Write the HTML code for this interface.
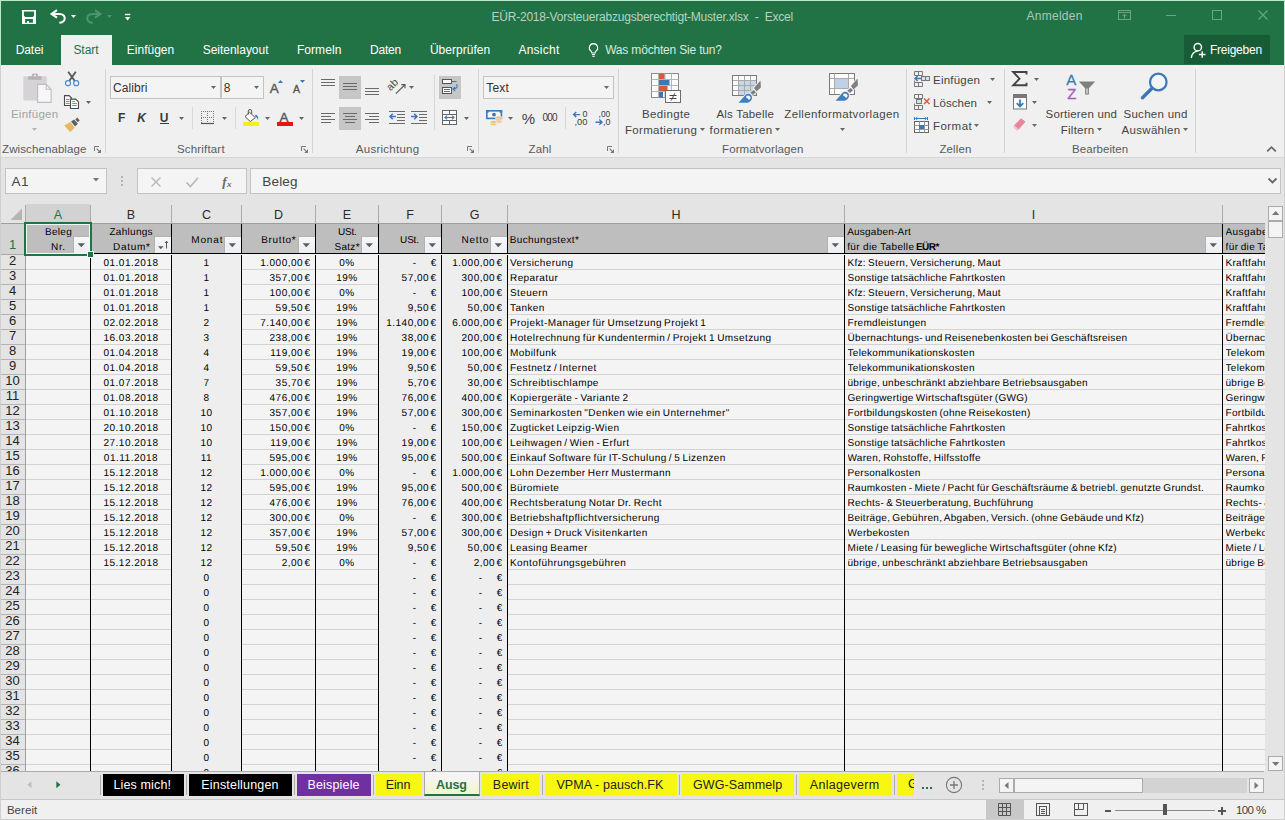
<!DOCTYPE html>
<html lang="de"><head><meta charset="utf-8"><title>EÜR-2018-Vorsteuerabzugsberechtigt-Muster.xlsx - Excel</title>
<style>
html,body{margin:0;padding:0}
body{width:1285px;height:820px;overflow:hidden;position:relative;background:#e4e4e4;font-family:'Liberation Sans',sans-serif;font-size:12px;color:#444}
div,span,svg{position:absolute;box-sizing:border-box}
.t{white-space:pre;line-height:1}
svg{overflow:visible}
.c{font-size:10px;letter-spacing:.42px;word-spacing:-1px;text-rendering:geometricPrecision;line-height:17px;height:15px;white-space:pre;color:#000;overflow:hidden}
.n{letter-spacing:.5px;word-spacing:-1.8px}
.ci{letter-spacing:.3px}
.rh{font-size:13px;line-height:15px;height:17px;width:25px;left:0;text-align:center;color:#222;overflow:hidden}
.ch{font-size:12.5px;line-height:23px;height:19px;overflow:hidden;top:204px;text-align:center;color:#2a2a2a}
.hh{text-rendering:geometricPrecision}
.fb{width:17px;height:17px;background:linear-gradient(#f6f7f9,#eceef2);border-left:1px solid #b2b2b2;border-top:1px solid #b2b2b2}
</style></head>
<body>
<div style="left:0px;top:0px;width:1285px;height:65px;background:#217346;"></div>
<svg style="left:22px;top:10px" width="14" height="14" viewBox="0 0 14 14"><path fill-rule="evenodd" fill="#fff" d="M0 0h14v14h-14zM1.9 1.4v4.2l1.2 1.3h7.8l1.2-1.3v-4.2zM3.1 9.1v3.7h1.9v-1.8h1.9v1.8h4v-3.7z"/></svg>
<svg style="left:50px;top:8px" width="18" height="16" viewBox="0 0 18 16"><path d="M7 2.2L1.6 6 7 9.7" fill="none" stroke="#fff" stroke-width="2.1" stroke-linejoin="miter"/><path d="M2.6 6H9.5C13.5 6 15.3 8.5 14.6 11.2 14 13.3 12 14.6 9.3 14.8" fill="none" stroke="#fff" stroke-width="2.1"/></svg>
<svg style="left:71px;top:15px" width="6" height="4" viewBox="0 0 6 4"><path d="M0 0H5L2.5 3Z" fill="#fff"/></svg>
<svg style="left:84px;top:8px" width="18" height="16" viewBox="0 0 18 16"><path d="M11 2.2L16.4 6 11 9.7" fill="none" stroke="#4f9470" stroke-width="2.1"/><path d="M15.4 6H8.5C4.5 6 2.7 8.5 3.4 11.2 4 13.3 6 14.6 8.7 14.8" fill="none" stroke="#4f9470" stroke-width="2.1"/></svg>
<svg style="left:107px;top:15px" width="6" height="4" viewBox="0 0 6 4"><path d="M0 0H5L2.5 3Z" fill="#4f9470"/></svg>
<svg style="left:124px;top:13px" width="8" height="8" viewBox="0 0 8 8"><rect x="0.9" y="0.8" width="5.4" height="1.4" fill="#fff"/><path d="M0.9 4h5.4l-2.7 3.4z" fill="#fff"/></svg>
<span class="t" style="left:491.48px;top:11px;font-size:12px;color:#b5d3c2;letter-spacing:-0.213px;">EÜR-2018-Vorsteuerabzugsberechtigt-Muster.xlsx  -  Excel</span>
<span class="t" style="left:1026.48px;top:10px;font-size:12px;color:#a9cab8;letter-spacing:0.270px;">Anmelden</span>
<svg style="left:1117px;top:9px" width="16" height="13" viewBox="0 0 16 13"><rect x="1.5" y="1.5" width="12" height="9" fill="none" stroke="#6aa585" stroke-width="1"/><path d="M1.5 3.5h12" stroke="#6aa585" stroke-width="1"/><path d="M7.5 9.5v-4.5M5.5 7l2-2 2 2" fill="none" stroke="#6aa585" stroke-width="1"/></svg>
<div style="left:1166px;top:15px;width:10px;height:1px;background:#6aa585;"></div>
<svg style="left:1211px;top:9px" width="12" height="12" viewBox="0 0 12 12"><rect x="1.5" y="1.5" width="9" height="9" fill="none" stroke="#6aa585" stroke-width="1"/></svg>
<svg style="left:1257px;top:9px" width="12" height="12" viewBox="0 0 12 12"><path d="M1.5 1.5l9 9M10.5 1.5l-9 9" stroke="#6aa585" stroke-width="1.1"/></svg>
<div style="left:61px;top:35px;width:51px;height:30px;background:#f0f0f0;"></div>
<span class="t" style="left:15.68px;top:44px;font-size:12px;color:#fff;letter-spacing:-0.069px;">Datei</span>
<span class="t" style="left:73.38px;top:44px;font-size:12px;color:#217346;letter-spacing:-0.026px;">Start</span>
<span class="t" style="left:126.78px;top:44px;font-size:12px;color:#fff;letter-spacing:0.009px;">Einfügen</span>
<span class="t" style="left:202.68px;top:44px;font-size:12px;color:#fff;letter-spacing:-0.019px;">Seitenlayout</span>
<span class="t" style="left:296.88px;top:44px;font-size:12px;color:#fff;letter-spacing:0.071px;">Formeln</span>
<span class="t" style="left:369.98px;top:44px;font-size:12px;color:#fff;letter-spacing:-0.198px;">Daten</span>
<span class="t" style="left:429.88px;top:44px;font-size:12px;color:#fff;letter-spacing:0.033px;">Überprüfen</span>
<span class="t" style="left:518.38px;top:44px;font-size:12px;color:#fff;letter-spacing:0.263px;">Ansicht</span>
<svg style="left:587px;top:42px" width="13" height="16" viewBox="0 0 13 16"><path d="M6.5 1.6a4.2 4.2 0 0 0-2.3 7.7c.5.5.7 1 .7 1.7h3.2c0-.7.2-1.2.7-1.7a4.2 4.2 0 0 0-2.3-7.7z" fill="none" stroke="#fff" stroke-width="1.1"/><path d="M4.9 12.6h3.2M5.3 14.3h2.4" stroke="#fff" stroke-width="1"/></svg>
<span class="t" style="left:605.18px;top:44px;font-size:12px;color:#d9eadf;letter-spacing:-0.181px;">Was möchten Sie tun?</span>
<div style="left:1184px;top:35px;width:86px;height:29px;background:#185c37;"></div>
<svg style="left:1190px;top:42px" width="17" height="17" viewBox="0 0 17 17"><circle cx="7.8" cy="5.2" r="3.7" fill="none" stroke="#fff" stroke-width="1.4"/><path d="M1.3 15.8c.6-4 2.9-6.4 6.4-6.7" fill="none" stroke="#fff" stroke-width="1.4"/><path d="M12.2 9.2v6.6M8.9 12.5h6.6" stroke="#fff" stroke-width="1.4"/></svg>
<span class="t" style="left:1209.88px;top:44px;font-size:12px;color:#fff;letter-spacing:-0.226px;">Freigeben</span>
<div style="left:0px;top:65px;width:1285px;height:92px;background:#f0f0f0;"></div>
<div style="left:0px;top:157px;width:1285px;height:1px;background:#d6d6d6;"></div>
<svg style="left:23px;top:73px" width="29" height="31" viewBox="0 0 29 31"><rect x="0.3" y="3.3" width="23.5" height="24.3" rx="1" fill="#d6d3d7"/><rect x="5" y="3.3" width="13.6" height="3.5" fill="#b6b3b7"/><path d="M8.8 3.5V2a1.6 1.6 0 0 1 1.6-1.6h3a1.6 1.6 0 0 1 1.6 1.6v1.5z" fill="#b6b3b7"/><circle cx="11.9" cy="2.5" r="1" fill="#f0f0f0"/><path d="M14.6 11.4h8.6l4.9 4.9v13.1H14.6z" fill="#f7f7f9" stroke="#bdbdbd" stroke-width="1.1"/><path d="M23.2 11.4v4.9h4.9" fill="none" stroke="#bdbdbd" stroke-width="1.1"/></svg>
<span class="t" style="left:10.91px;top:109px;font-size:11.5px;color:#a3a3a3;letter-spacing:0.268px;">Einfügen</span>
<svg style="left:32px;top:128px" width="6" height="4" viewBox="0 0 6 4"><path d="M0 0H5L2.5 3Z" fill="#b5b5b5"/></svg>
<svg style="left:64px;top:71px" width="16" height="16" viewBox="0 0 16 16"><path d="M4.2 0.8l6.6 9.2M11.8 0.8L5.2 10" stroke="#5a5a5a" stroke-width="1.9" fill="none"/><circle cx="4" cy="12.2" r="2.5" fill="#f4f6f9" stroke="#4a8ad0" stroke-width="1.2"/><circle cx="12.2" cy="12.2" r="2.5" fill="#f4f6f9" stroke="#4a8ad0" stroke-width="1.2"/></svg>
<svg style="left:63px;top:95px" width="17" height="15" viewBox="0 0 17 15"><path d="M1.5 0.6h4.6l2.4 2.4v7.5h-7z" fill="#fafafa" stroke="#4a4a4a" stroke-width="1.1"/><path d="M3 4.5h3.5M3 6.5h3.5M3 8.5h3.5" stroke="#4a8ad0" stroke-width="0.9"/><path d="M7.5 4.1h5.2l2.8 2.8v6.6h-8z" fill="#fafafa" stroke="#4a4a4a" stroke-width="1.1"/><path d="M9.2 8.5h4.6M9.2 10.5h4.6" stroke="#4a8ad0" stroke-width="0.9"/><path d="M9.2 6.5h2.6" stroke="#4a8ad0" stroke-width="0.9"/></svg>
<svg style="left:86px;top:101px" width="6" height="4" viewBox="0 0 6 4"><path d="M0 0H5L2.5 3Z" fill="#666"/></svg>
<svg style="left:63px;top:117px" width="18" height="16" viewBox="0 0 18 16"><path d="M1.2 8.4l6.1-3.4 4.4 5.4-4.4 4.9z" fill="#e8b766"/><path d="M8 4.6l3.2-2.2 3.6 4.4-2.6 2.6z" fill="#5f5f5f"/><path d="M12.3 2.2l2-1.6 2.4 3-2 1.6z" fill="#5f5f5f"/></svg>
<span class="t" style="left:2.11px;top:144px;font-size:11.5px;color:#5a5a5a;letter-spacing:0.090px;">Zwischenablage</span>
<svg style="left:94px;top:146px" width="8" height="8" viewBox="0 0 8 8"><path d="M0.5 5V0.5H5" fill="none" stroke="#777" stroke-width="1"/><path d="M2.6 2.6L6.4 6.4" stroke="#777" stroke-width="1.1"/><path d="M7 3.2V7H3.2z" fill="#777"/></svg>
<div style="left:105px;top:69px;width:1px;height:84px;background:#d4d4d4;"></div>
<div style="left:110px;top:76px;width:111px;height:23px;background:#f4f4f4;border:1px solid #c3c3c3;"></div>
<div style="left:221px;top:76px;width:43px;height:23px;background:#f4f4f4;border:1px solid #c3c3c3;"></div>
<span class="t" style="left:113.08px;top:82px;font-size:12px;color:#333;letter-spacing:0.054px;">Calibri</span>
<svg style="left:211px;top:86px" width="6" height="4" viewBox="0 0 6 4"><path d="M0 0H5L2.5 3Z" fill="#666"/></svg>
<span class="t" style="left:223.68px;top:82px;font-size:12px;color:#333;">8</span>
<svg style="left:254px;top:86px" width="6" height="4" viewBox="0 0 6 4"><path d="M0 0H5L2.5 3Z" fill="#666"/></svg>
<span class="t" style="left:269.79px;top:82px;font-size:13.5px;color:#555;-webkit-text-stroke:.35px #555;">A</span>
<svg style="left:278px;top:80px" width="6" height="4" viewBox="0 0 6 4"><path d="M0 3L2.5 0 5 3z" fill="#3b78b4"/></svg>
<span class="t" style="left:292.97px;top:84px;font-size:10.5px;color:#555;-webkit-text-stroke:.35px #555;">A</span>
<svg style="left:300px;top:80px" width="6" height="4" viewBox="0 0 6 4"><path d="M0 0h5L2.5 3z" fill="#3b78b4"/></svg>
<span class="t" style="left:117.98px;top:112px;font-size:12px;color:#3a3a3a;font-weight:bold;">F</span>
<span class="t" style="left:137.28px;top:112px;font-size:12px;color:#3a3a3a;font-weight:bold;font-style:italic;">K</span>
<span class="t" style="left:159.68px;top:112px;font-size:12px;color:#3a3a3a;font-weight:bold;">U</span>
<div style="left:160px;top:123px;width:9px;height:1px;background:#3a3a3a;"></div>
<svg style="left:179px;top:117px" width="6" height="4" viewBox="0 0 6 4"><path d="M0 0H5L2.5 3Z" fill="#666"/></svg>
<div style="left:192px;top:107px;width:1px;height:22px;background:#d8d8d8;"></div>
<svg style="left:200px;top:110px" width="15" height="15" viewBox="0 0 15 15"><path d="M1 1.5h13M1 7.5h13M1.5 1v7M7.5 1v12M13.5 1v12M1.5 8v5" stroke="#777" stroke-width="1" stroke-dasharray="1 1" fill="none"/><path d="M1 13.5h13" stroke="#555" stroke-width="1.2"/></svg>
<svg style="left:222px;top:117px" width="6" height="4" viewBox="0 0 6 4"><path d="M0 0H5L2.5 3Z" fill="#666"/></svg>
<div style="left:235px;top:107px;width:1px;height:22px;background:#d8d8d8;"></div>
<svg style="left:243px;top:109px" width="18" height="14" viewBox="0 0 18 14"><path d="M6.5 3.2l5.8 5.4-5 4-5.3-5z" fill="#fafafa" stroke="#555" stroke-width="1"/><path d="M5.3 5.5V2.2a1.7 1.7 0 0 1 3.4 0v2.6" fill="none" stroke="#555" stroke-width="1"/><path d="M12.5 5.6c2 .6 3.2 2.6 2.6 5.4-.9-2-1.8-3-3-3.4z" fill="#3b78b4"/></svg>
<div style="left:243px;top:122px;width:16px;height:4px;background:#f5ef1c;"></div>
<svg style="left:265px;top:117px" width="6" height="4" viewBox="0 0 6 4"><path d="M0 0H5L2.5 3Z" fill="#666"/></svg>
<span class="t" style="left:279.39px;top:111px;font-size:13.5px;color:#555;-webkit-text-stroke:.4px #555;">A</span>
<div style="left:277px;top:122px;width:16px;height:4px;background:#ee1111;"></div>
<svg style="left:299px;top:117px" width="6" height="4" viewBox="0 0 6 4"><path d="M0 0H5L2.5 3Z" fill="#666"/></svg>
<span class="t" style="left:176.91px;top:144px;font-size:11.5px;color:#5a5a5a;letter-spacing:0.185px;">Schriftart</span>
<svg style="left:301px;top:146px" width="8" height="8" viewBox="0 0 8 8"><path d="M0.5 5V0.5H5" fill="none" stroke="#777" stroke-width="1"/><path d="M2.6 2.6L6.4 6.4" stroke="#777" stroke-width="1.1"/><path d="M7 3.2V7H3.2z" fill="#777"/></svg>
<div style="left:312px;top:69px;width:1px;height:84px;background:#d4d4d4;"></div>
<div style="left:321px;top:79px;width:14px;height:1px;background:#6a6a6a;"></div>
<div style="left:321px;top:82px;width:14px;height:1px;background:#6a6a6a;"></div>
<div style="left:321px;top:85px;width:14px;height:1px;background:#6a6a6a;"></div>
<div style="left:339px;top:76px;width:22px;height:23px;background:#c6c6c6;"></div>
<div style="left:343px;top:83px;width:14px;height:1px;background:#6a6a6a;"></div>
<div style="left:343px;top:86px;width:14px;height:1px;background:#6a6a6a;"></div>
<div style="left:343px;top:89px;width:14px;height:1px;background:#6a6a6a;"></div>
<div style="left:365px;top:88px;width:14px;height:1px;background:#6a6a6a;"></div>
<div style="left:365px;top:91px;width:14px;height:1px;background:#6a6a6a;"></div>
<div style="left:365px;top:94px;width:14px;height:1px;background:#6a6a6a;"></div>
<svg style="left:388px;top:78px" width="18" height="17" viewBox="0 0 18 17"><path d="M7.9 15.6L16.6 7" stroke="#555" stroke-width="1.1"/><path d="M13.4 6.6h3.6v3.6" fill="none" stroke="#555" stroke-width="1.1"/><text x="0" y="0" font-size="10.5" fill="#4a4a4a" font-family="Liberation Sans" transform="translate(2.6 13.2) rotate(-45)">ab</text></svg>
<svg style="left:409px;top:86px" width="6" height="4" viewBox="0 0 6 4"><path d="M0 0H5L2.5 3Z" fill="#666"/></svg>
<div style="left:321px;top:113px;width:14px;height:1px;background:#6a6a6a;"></div>
<div style="left:321px;top:116px;width:10px;height:1px;background:#6a6a6a;"></div>
<div style="left:321px;top:119px;width:14px;height:1px;background:#6a6a6a;"></div>
<div style="left:321px;top:122px;width:10px;height:1px;background:#6a6a6a;"></div>
<div style="left:339px;top:107px;width:22px;height:23px;background:#c6c6c6;"></div>
<div style="left:343px;top:113px;width:14px;height:1px;background:#6a6a6a;"></div>
<div style="left:345px;top:116px;width:10px;height:1px;background:#6a6a6a;"></div>
<div style="left:343px;top:119px;width:14px;height:1px;background:#6a6a6a;"></div>
<div style="left:345px;top:122px;width:10px;height:1px;background:#6a6a6a;"></div>
<div style="left:365px;top:113px;width:14px;height:1px;background:#6a6a6a;"></div>
<div style="left:369px;top:116px;width:10px;height:1px;background:#6a6a6a;"></div>
<div style="left:365px;top:119px;width:14px;height:1px;background:#6a6a6a;"></div>
<div style="left:369px;top:122px;width:10px;height:1px;background:#6a6a6a;"></div>
<div style="left:389px;top:111px;width:16px;height:1px;background:#6a6a6a;"></div>
<div style="left:397px;top:114px;width:8px;height:1px;background:#6a6a6a;"></div>
<div style="left:397px;top:117px;width:8px;height:1px;background:#6a6a6a;"></div>
<div style="left:397px;top:120px;width:8px;height:1px;background:#6a6a6a;"></div>
<div style="left:389px;top:123px;width:16px;height:1px;background:#6a6a6a;"></div>
<svg style="left:389px;top:113px" width="8" height="8" viewBox="0 0 8 8"><path d="M7 3.5H1.2M3.8 0.8L1 3.5l2.8 2.7" fill="none" stroke="#3b78b4" stroke-width="1.5"/></svg>
<div style="left:411px;top:111px;width:16px;height:1px;background:#6a6a6a;"></div>
<div style="left:419px;top:114px;width:8px;height:1px;background:#6a6a6a;"></div>
<div style="left:419px;top:117px;width:8px;height:1px;background:#6a6a6a;"></div>
<div style="left:419px;top:120px;width:8px;height:1px;background:#6a6a6a;"></div>
<div style="left:411px;top:123px;width:16px;height:1px;background:#6a6a6a;"></div>
<svg style="left:411px;top:113px" width="8" height="8" viewBox="0 0 8 8"><path d="M0 3.5h5.8M3.2 0.8L6 3.5 3.2 6.2" fill="none" stroke="#3b78b4" stroke-width="1.5"/></svg>
<div style="left:434px;top:75px;width:1px;height:55px;background:#d8d8d8;"></div>
<div style="left:439px;top:76px;width:22px;height:23px;background:#c6c6c6;"></div>
<svg style="left:442px;top:79px" width="17" height="16" viewBox="0 0 17 16"><rect x="0.5" y="0.5" width="9" height="4" fill="#fafafa" stroke="#555"/><path d="M9.5 2.5h5" stroke="#3b78b4"/><rect x="0.5" y="8.5" width="9" height="6" fill="#fafafa" stroke="#555"/><path d="M2 10.5h6M2 12.5h6" stroke="#3b78b4"/><path d="M14.5 5c1.5 2 .5 5-3 5M13 8l-2 2 2 2" fill="none" stroke="#3b78b4" stroke-width="1.1"/></svg>
<svg style="left:442px;top:110px" width="16" height="16" viewBox="0 0 16 16"><rect x="0.5" y="0.5" width="14" height="14" fill="#fafafa" stroke="#666"/><path d="M0.5 4.5h14M0.5 10.5h14M7.5 0.5v4M7.5 10.5v4" stroke="#666" fill="none"/><path d="M3 7.5h9M5 5.7L3 7.5l2 1.8M10 5.7l2 1.8-2 1.8" fill="none" stroke="#3b78b4" stroke-width="1.1"/></svg>
<svg style="left:464px;top:117px" width="6" height="4" viewBox="0 0 6 4"><path d="M0 0H5L2.5 3Z" fill="#666"/></svg>
<span class="t" style="left:355.81px;top:144px;font-size:11.5px;color:#5a5a5a;letter-spacing:0.265px;">Ausrichtung</span>
<svg style="left:467px;top:146px" width="8" height="8" viewBox="0 0 8 8"><path d="M0.5 5V0.5H5" fill="none" stroke="#777" stroke-width="1"/><path d="M2.6 2.6L6.4 6.4" stroke="#777" stroke-width="1.1"/><path d="M7 3.2V7H3.2z" fill="#777"/></svg>
<div style="left:478px;top:69px;width:1px;height:84px;background:#d4d4d4;"></div>
<div style="left:483px;top:76px;width:131px;height:23px;background:#f4f4f4;border:1px solid #c3c3c3;"></div>
<span class="t" style="left:486.18px;top:82px;font-size:12px;color:#333;letter-spacing:0.241px;">Text</span>
<svg style="left:604px;top:86px" width="6" height="4" viewBox="0 0 6 4"><path d="M0 0H5L2.5 3Z" fill="#666"/></svg>
<svg style="left:486px;top:110px" width="17" height="16" viewBox="0 0 17 16"><rect x="0.8" y="0.8" width="14.6" height="7.6" fill="#f4f6f9" stroke="#3b78b4" stroke-width="1.6"/><circle cx="8" cy="4.6" r="1.9" fill="#3b78b4"/><rect x="0" y="0" width="2.6" height="2.6" fill="#3b78b4"/><rect x="13.6" y="0" width="2.6" height="2.6" fill="#3b78b4"/><g fill="#ebbf78" stroke="#f0f0f0" stroke-width="0.7"><ellipse cx="12.6" cy="11.6" rx="3.4" ry="1.5"/><ellipse cx="12.6" cy="9.6" rx="3.4" ry="1.5"/><ellipse cx="12.6" cy="7.6" rx="3.4" ry="1.5"/><ellipse cx="7.4" cy="14" rx="3.4" ry="1.5"/><ellipse cx="7.4" cy="12" rx="3.4" ry="1.5"/></g></svg>
<svg style="left:508px;top:117px" width="6" height="4" viewBox="0 0 6 4"><path d="M0 0H5L2.5 3Z" fill="#666"/></svg>
<span class="t" style="left:521.70px;top:111px;font-size:15px;color:#444;">%</span>
<span class="t" style="left:542.40px;top:113px;font-size:10px;color:#3a3a3a;letter-spacing:-0.750px;">000</span>
<div style="left:565px;top:107px;width:1px;height:22px;background:#d8d8d8;"></div>
<svg style="left:572px;top:110px" width="16" height="16" viewBox="0 0 16 16"><path d="M8.2 4.6H1.8M4.3 2L1.6 4.6l2.7 2.6" fill="none" stroke="#3b78b4" stroke-width="1.4"/><text x="10.4" y="7.3" font-size="9.5" fill="#3a3a3a" font-family="Liberation Sans" textLength="5" lengthAdjust="spacingAndGlyphs">0</text><text x="2.4" y="15.4" font-size="9.5" fill="#3a3a3a" font-family="Liberation Sans" textLength="13" lengthAdjust="spacingAndGlyphs">,00</text></svg>
<svg style="left:595px;top:110px" width="16" height="16" viewBox="0 0 16 16"><text x="3.6" y="7.3" font-size="9.5" fill="#3a3a3a" font-family="Liberation Sans" textLength="11.6" lengthAdjust="spacingAndGlyphs">,00</text><path d="M0.4 12.2H6.8M4.3 9.6L7 12.2l-2.7 2.6" fill="none" stroke="#3b78b4" stroke-width="1.4"/><text x="8" y="15.4" font-size="9.5" fill="#3a3a3a" font-family="Liberation Sans" textLength="7.4" lengthAdjust="spacingAndGlyphs">,0</text></svg>
<span class="t" style="left:528.61px;top:144px;font-size:11.5px;color:#5a5a5a;letter-spacing:0.135px;">Zahl</span>
<svg style="left:607px;top:146px" width="8" height="8" viewBox="0 0 8 8"><path d="M0.5 5V0.5H5" fill="none" stroke="#777" stroke-width="1"/><path d="M2.6 2.6L6.4 6.4" stroke="#777" stroke-width="1.1"/><path d="M7 3.2V7H3.2z" fill="#777"/></svg>
<div style="left:618px;top:69px;width:1px;height:84px;background:#d4d4d4;"></div>
<svg style="left:651px;top:73px" width="31" height="31" viewBox="0 0 31 31"><rect x="0.5" y="0.5" width="27" height="24" fill="#fbfbfb" stroke="#8a8a8a"/><path d="M7.5 0.5v24M14 0.5v24M20.5 0.5v24M0.5 6.5h27M0.5 12.5h27M0.5 18.5h27" stroke="#b5b5b5" fill="none"/><rect x="8" y="1" width="5.5" height="5" fill="#d9573b"/><rect x="8" y="7" width="10.5" height="5" fill="#3b78b4"/><rect x="8" y="13" width="8.5" height="5" fill="#d9573b"/><rect x="8" y="19" width="4" height="5.5" fill="#3b78b4"/><rect x="14.5" y="17.5" width="15" height="12" fill="#fbfbfb" stroke="#6a6a6a"/><path d="M18.5 22.5h7M18.5 25.5h7" stroke="#444" stroke-width="1" fill="none"/><path d="M23.8 20.2l-3.6 7.4" stroke="#444" stroke-width="0.9" fill="none"/></svg>
<span class="t" style="left:642.01px;top:109px;font-size:11.5px;color:#444;letter-spacing:0.368px;">Bedingte</span>
<span class="t" style="left:625.01px;top:125px;font-size:11.5px;color:#444;letter-spacing:0.317px;">Formatierung</span>
<svg style="left:700px;top:128px" width="6" height="4" viewBox="0 0 6 4"><path d="M0 0H5L2.5 3Z" fill="#666"/></svg>
<svg style="left:732px;top:75px" width="31" height="29" viewBox="0 0 31 29"><rect x="0.5" y="0.5" width="24" height="20" fill="#fbfbfb" stroke="#7a7a7a"/><rect x="6.5" y="5.5" width="18" height="15" fill="#c6d7ea"/><path d="M6.5 1v19M12.5 1v19M18.5 1v19M1 5.5h23M1 10.5h23M1 15.5h23" stroke="#a9a9a9" fill="none"/><rect x="0.5" y="0.5" width="24" height="20" fill="none" stroke="#7a7a7a"/><g transform="translate(0 0)"><path d="M28.5 5.6L28.9 12.4 24.4 16.4 22 13z" fill="#7f7f7f" stroke="#f0f0f0" stroke-width="1.8" paint-order="stroke" stroke-linejoin="round"/><path d="M21.7 15L24 17.3 20.8 19.9 18.3 17.4z" fill="#7f7f7f" stroke="#f0f0f0" stroke-width="1.8" paint-order="stroke" stroke-linejoin="round"/><path d="M6.6 27.7L13.4 20.1C16 17.4 20.6 19.4 19.9 23.5 19.4 26 17.1 27.7 14.8 27.7z" fill="#3f7fc0" stroke="#f0f0f0" stroke-width="1.8" paint-order="stroke" stroke-linejoin="round"/><path d="M14.2 21.2C15.8 19.6 18.6 20.6 18.7 23L17.2 24.9 14.3 22.3z" fill="#f3f6fa"/></g></svg>
<span class="t" style="left:716.51px;top:109px;font-size:11.5px;color:#444;letter-spacing:0.187px;">Als Tabelle</span>
<span class="t" style="left:709.61px;top:125px;font-size:11.5px;color:#444;letter-spacing:0.441px;">formatieren</span>
<svg style="left:775px;top:128px" width="6" height="4" viewBox="0 0 6 4"><path d="M0 0H5L2.5 3Z" fill="#666"/></svg>
<svg style="left:829px;top:73px" width="31" height="29" viewBox="0 0 31 29"><rect x="0.5" y="0.5" width="25" height="21" fill="#fbfbfb" stroke="#7a7a7a"/><rect x="5.5" y="5.5" width="14" height="10" fill="#bfd1e6"/><path d="M5.5 1v20M19.5 1v20M1 5.5h24M1 15.5h24" stroke="#a9a9a9" fill="none"/><rect x="0.5" y="0.5" width="25" height="21" fill="none" stroke="#7a7a7a"/><g transform="translate(0 0)"><path d="M28.5 5.6L28.9 12.4 24.4 16.4 22 13z" fill="#7f7f7f" stroke="#f0f0f0" stroke-width="1.8" paint-order="stroke" stroke-linejoin="round"/><path d="M21.7 15L24 17.3 20.8 19.9 18.3 17.4z" fill="#7f7f7f" stroke="#f0f0f0" stroke-width="1.8" paint-order="stroke" stroke-linejoin="round"/><path d="M6.6 27.7L13.4 20.1C16 17.4 20.6 19.4 19.9 23.5 19.4 26 17.1 27.7 14.8 27.7z" fill="#3f7fc0" stroke="#f0f0f0" stroke-width="1.8" paint-order="stroke" stroke-linejoin="round"/><path d="M14.2 21.2C15.8 19.6 18.6 20.6 18.7 23L17.2 24.9 14.3 22.3z" fill="#f3f6fa"/></g></svg>
<span class="t" style="left:784.31px;top:109px;font-size:11.5px;color:#444;letter-spacing:0.360px;">Zellenformatvorlagen</span>
<svg style="left:840px;top:128px" width="6" height="4" viewBox="0 0 6 4"><path d="M0 0H5L2.5 3Z" fill="#666"/></svg>
<span class="t" style="left:722.11px;top:144px;font-size:11.5px;color:#5a5a5a;letter-spacing:0.049px;">Formatvorlagen</span>
<div style="left:906px;top:69px;width:1px;height:84px;background:#d4d4d4;"></div>
<svg style="left:914px;top:71px" width="17" height="16" viewBox="0 0 17 16"><path d="M0.5 0.5h8v4h-8zM4.5 0.5v4M0.5 11.5h8v4h-8zM4.5 11.5v4M0.5 11.5v-2" fill="none" stroke="#777"/><rect x="7.5" y="5.5" width="8" height="4" fill="#d5dfea" stroke="#777"/><path d="M11.5 5.5v4" stroke="#777"/><path d="M7 7.5H1.2M3.6 5L1 7.5 3.6 10" fill="none" stroke="#3b78b4" stroke-width="1.4"/></svg>
<span class="t" style="left:933.01px;top:75px;font-size:11.5px;color:#444;letter-spacing:0.225px;">Einfügen</span>
<svg style="left:990px;top:78px" width="6" height="4" viewBox="0 0 6 4"><path d="M0 0H5L2.5 3Z" fill="#666"/></svg>
<svg style="left:914px;top:94px" width="17" height="16" viewBox="0 0 17 16"><path d="M0.5 0.5h8v4h-8zM4.5 0.5v4M0.5 11.5h8v4h-8zM4.5 11.5v4M0.5 9.5v2" fill="none" stroke="#777"/><rect x="2.5" y="5.5" width="5" height="4" fill="#d5dfea" stroke="#777"/><path d="M10 4.5l5.5 5.5M15.5 4.5L10 10" stroke="#e0583c" stroke-width="1.5"/></svg>
<span class="t" style="left:933.01px;top:98px;font-size:11.5px;color:#444;letter-spacing:0.066px;">Löschen</span>
<svg style="left:987px;top:101px" width="6" height="4" viewBox="0 0 6 4"><path d="M0 0H5L2.5 3Z" fill="#666"/></svg>
<svg style="left:914px;top:117px" width="17" height="17" viewBox="0 0 17 17"><path d="M0.5 0v3M13.5 0v3M1.5 1.5h11" stroke="#3b78b4" stroke-width="1"/><path d="M3.2 0.3L1.6 1.5l1.6 1.2M10.8 0.3l1.6 1.2-1.6 1.2" fill="none" stroke="#3b78b4"/><rect x="0.5" y="4.5" width="14" height="11" fill="#fbfbfb" stroke="#666"/><path d="M0.5 8.5h14M0.5 12.5h14M5.5 4.5v11M10.5 4.5v11" stroke="#999" fill="none"/><rect x="5" y="8" width="5" height="4" fill="#3b78b4"/></svg>
<span class="t" style="left:933.01px;top:121px;font-size:11.5px;color:#444;letter-spacing:0.452px;">Format</span>
<svg style="left:974px;top:124px" width="6" height="4" viewBox="0 0 6 4"><path d="M0 0H5L2.5 3Z" fill="#666"/></svg>
<span class="t" style="left:939.51px;top:144px;font-size:11.5px;color:#5a5a5a;letter-spacing:0.090px;">Zellen</span>
<div style="left:1004px;top:69px;width:1px;height:84px;background:#d4d4d4;"></div>
<svg style="left:1012px;top:71px" width="16" height="16" viewBox="0 0 16 16"><path d="M14.5 3.5V1H1.2l6.3 6.7-6.3 6.6h13.3v-2.5" fill="none" stroke="#444" stroke-width="1.9"/></svg>
<svg style="left:1034px;top:78px" width="6" height="4" viewBox="0 0 6 4"><path d="M0 0H5L2.5 3Z" fill="#666"/></svg>
<svg style="left:1013px;top:94px" width="15" height="16" viewBox="0 0 15 16"><rect x="0.5" y="0.5" width="13" height="14.5" fill="#fbfbfb" stroke="#777"/><rect x="0.5" y="0.5" width="13" height="3.5" fill="#777"/><path d="M7 5.5v7M3.8 9.2L7 12.4l3.2-3.2" fill="none" stroke="#3b78b4" stroke-width="1.8"/></svg>
<svg style="left:1032px;top:101px" width="6" height="4" viewBox="0 0 6 4"><path d="M0 0H5L2.5 3Z" fill="#666"/></svg>
<svg style="left:1013px;top:117px" width="14" height="14" viewBox="0 0 14 14"><path d="M1 8.5L8 1.2l4.5 3.6-6.8 7.6z" fill="#e8879a"/><path d="M1 8.5l4.6 4-1.4 1.2L0.2 10z" fill="#f4c0ca"/></svg>
<svg style="left:1032px;top:124px" width="6" height="4" viewBox="0 0 6 4"><path d="M0 0H5L2.5 3Z" fill="#666"/></svg>
<svg style="left:1066px;top:73px" width="31" height="28" viewBox="0 0 31 28"><text x="0.3" y="11.8" font-size="15" fill="#3b78b4" font-family="Liberation Sans" stroke="#3b78b4" stroke-width="0.3">A</text><text x="1.2" y="26.2" font-size="15" fill="#a25bbd" font-family="Liberation Sans" stroke="#a25bbd" stroke-width="0.3">Z</text><path d="M12.8 8.6h16.4l-6.3 6.6v6.3h-3.8v-6.3z" fill="#7f7f7f"/><path d="M20.4 15.4v5h1.2v-5" fill="#f0f0f0"/></svg>
<span class="t" style="left:1045.61px;top:109px;font-size:11.5px;color:#444;letter-spacing:0.194px;">Sortieren und</span>
<span class="t" style="left:1060.81px;top:125px;font-size:11.5px;color:#444;letter-spacing:0.238px;">Filtern</span>
<svg style="left:1097px;top:128px" width="6" height="4" viewBox="0 0 6 4"><path d="M0 0H5L2.5 3Z" fill="#666"/></svg>
<svg style="left:1140px;top:72px" width="30" height="29" viewBox="0 0 30 29"><circle cx="18.3" cy="10" r="8.3" fill="#f4f4f4" stroke="#3b78b4" stroke-width="2.2"/><path d="M12 16.3L2.5 25.8" stroke="#3b78b4" stroke-width="3.4" stroke-linecap="round"/></svg>
<span class="t" style="left:1123.51px;top:109px;font-size:11.5px;color:#444;letter-spacing:0.277px;">Suchen und</span>
<span class="t" style="left:1121.61px;top:125px;font-size:11.5px;color:#444;letter-spacing:0.289px;">Auswählen</span>
<svg style="left:1183px;top:128px" width="6" height="4" viewBox="0 0 6 4"><path d="M0 0H5L2.5 3Z" fill="#666"/></svg>
<span class="t" style="left:1072.01px;top:144px;font-size:11.5px;color:#5a5a5a;letter-spacing:0.062px;">Bearbeiten</span>
<div style="left:1195px;top:69px;width:1px;height:84px;background:#d4d4d4;"></div>
<svg style="left:1266px;top:145px" width="11" height="8" viewBox="0 0 11 8"><path d="M1.2 6.4L5.5 2.1l4.3 4.3" fill="none" stroke="#666" stroke-width="1.7"/></svg>
<div style="left:0px;top:158px;width:1285px;height:46px;background:#e4e4e4;"></div>
<div style="left:5px;top:168px;width:102px;height:26px;background:#f4f4f4;border:1px solid #c3c3c3;"></div>
<span class="t" style="left:11.39px;top:175px;font-size:13.5px;color:#444;letter-spacing:0.504px;">A1</span>
<svg style="left:93px;top:178px" width="7" height="5" viewBox="0 0 7 5"><path d="M0 0h6L3 3.5z" fill="#777"/></svg>
<div style="left:121px;top:176px;width:2px;height:2px;background:#b4b4b4;"></div>
<div style="left:121px;top:180px;width:2px;height:2px;background:#b4b4b4;"></div>
<div style="left:121px;top:184px;width:2px;height:2px;background:#b4b4b4;"></div>
<div style="left:137px;top:168px;width:110px;height:26px;background:#f4f4f4;border:1px solid #c3c3c3;"></div>
<svg style="left:150px;top:176px" width="12" height="12" viewBox="0 0 12 12"><path d="M1.5 1.5l9 9M10.5 1.5l-9 9" stroke="#b8b8b8" stroke-width="1.4"/></svg>
<svg style="left:185px;top:176px" width="15" height="12" viewBox="0 0 15 12"><path d="M1.5 6.5l4 4L13 1.8" fill="none" stroke="#b8b8b8" stroke-width="1.7"/></svg>
<span class="t" style="left:222.22px;top:175px;font-size:13px;color:#666;font-style:italic;font-family:'Liberation Serif',serif;font-weight:bold;">f</span>
<span class="t" style="left:227.06px;top:180px;font-size:9px;color:#666;font-style:italic;font-family:'Liberation Serif',serif;font-weight:bold;">x</span>
<div style="left:250px;top:168px;width:1031px;height:26px;background:#f4f4f4;border:1px solid #c3c3c3;"></div>
<span class="t" style="left:262.19px;top:175px;font-size:13.5px;color:#444;letter-spacing:0.222px;">Beleg</span>
<svg style="left:1267px;top:177px" width="11" height="8" viewBox="0 0 11 8"><path d="M1.5 1.5L5.5 5.5l4-4" fill="none" stroke="#666" stroke-width="1.8"/></svg>
<div style="left:0px;top:204px;width:1265px;height:20px;background:#e4e4e4;"></div>
<div style="left:0px;top:224px;width:26px;height:547px;background:#e4e4e4;"></div>
<div style="left:26px;top:224px;width:1239px;height:547px;background:#f4f4f4;"></div>
<div style="left:26px;top:269px;width:1239px;height:1px;background:#d3d3d3;"></div>
<div style="left:0px;top:269px;width:25px;height:1px;background:#b4b4b4;"></div>
<div style="left:26px;top:284px;width:1239px;height:1px;background:#d3d3d3;"></div>
<div style="left:0px;top:284px;width:25px;height:1px;background:#b4b4b4;"></div>
<div style="left:26px;top:299px;width:1239px;height:1px;background:#d3d3d3;"></div>
<div style="left:0px;top:299px;width:25px;height:1px;background:#b4b4b4;"></div>
<div style="left:26px;top:314px;width:1239px;height:1px;background:#d3d3d3;"></div>
<div style="left:0px;top:314px;width:25px;height:1px;background:#b4b4b4;"></div>
<div style="left:26px;top:329px;width:1239px;height:1px;background:#d3d3d3;"></div>
<div style="left:0px;top:329px;width:25px;height:1px;background:#b4b4b4;"></div>
<div style="left:26px;top:344px;width:1239px;height:1px;background:#d3d3d3;"></div>
<div style="left:0px;top:344px;width:25px;height:1px;background:#b4b4b4;"></div>
<div style="left:26px;top:359px;width:1239px;height:1px;background:#d3d3d3;"></div>
<div style="left:0px;top:359px;width:25px;height:1px;background:#b4b4b4;"></div>
<div style="left:26px;top:374px;width:1239px;height:1px;background:#d3d3d3;"></div>
<div style="left:0px;top:374px;width:25px;height:1px;background:#b4b4b4;"></div>
<div style="left:26px;top:389px;width:1239px;height:1px;background:#d3d3d3;"></div>
<div style="left:0px;top:389px;width:25px;height:1px;background:#b4b4b4;"></div>
<div style="left:26px;top:404px;width:1239px;height:1px;background:#d3d3d3;"></div>
<div style="left:0px;top:404px;width:25px;height:1px;background:#b4b4b4;"></div>
<div style="left:26px;top:419px;width:1239px;height:1px;background:#d3d3d3;"></div>
<div style="left:0px;top:419px;width:25px;height:1px;background:#b4b4b4;"></div>
<div style="left:26px;top:434px;width:1239px;height:1px;background:#d3d3d3;"></div>
<div style="left:0px;top:434px;width:25px;height:1px;background:#b4b4b4;"></div>
<div style="left:26px;top:449px;width:1239px;height:1px;background:#d3d3d3;"></div>
<div style="left:0px;top:449px;width:25px;height:1px;background:#b4b4b4;"></div>
<div style="left:26px;top:464px;width:1239px;height:1px;background:#d3d3d3;"></div>
<div style="left:0px;top:464px;width:25px;height:1px;background:#b4b4b4;"></div>
<div style="left:26px;top:479px;width:1239px;height:1px;background:#d3d3d3;"></div>
<div style="left:0px;top:479px;width:25px;height:1px;background:#b4b4b4;"></div>
<div style="left:26px;top:494px;width:1239px;height:1px;background:#d3d3d3;"></div>
<div style="left:0px;top:494px;width:25px;height:1px;background:#b4b4b4;"></div>
<div style="left:26px;top:509px;width:1239px;height:1px;background:#d3d3d3;"></div>
<div style="left:0px;top:509px;width:25px;height:1px;background:#b4b4b4;"></div>
<div style="left:26px;top:524px;width:1239px;height:1px;background:#d3d3d3;"></div>
<div style="left:0px;top:524px;width:25px;height:1px;background:#b4b4b4;"></div>
<div style="left:26px;top:539px;width:1239px;height:1px;background:#d3d3d3;"></div>
<div style="left:0px;top:539px;width:25px;height:1px;background:#b4b4b4;"></div>
<div style="left:26px;top:554px;width:1239px;height:1px;background:#d3d3d3;"></div>
<div style="left:0px;top:554px;width:25px;height:1px;background:#b4b4b4;"></div>
<div style="left:26px;top:569px;width:1239px;height:1px;background:#d3d3d3;"></div>
<div style="left:0px;top:569px;width:25px;height:1px;background:#b4b4b4;"></div>
<div style="left:26px;top:584px;width:1239px;height:1px;background:#d3d3d3;"></div>
<div style="left:0px;top:584px;width:25px;height:1px;background:#b4b4b4;"></div>
<div style="left:26px;top:599px;width:1239px;height:1px;background:#d3d3d3;"></div>
<div style="left:0px;top:599px;width:25px;height:1px;background:#b4b4b4;"></div>
<div style="left:26px;top:614px;width:1239px;height:1px;background:#d3d3d3;"></div>
<div style="left:0px;top:614px;width:25px;height:1px;background:#b4b4b4;"></div>
<div style="left:26px;top:629px;width:1239px;height:1px;background:#d3d3d3;"></div>
<div style="left:0px;top:629px;width:25px;height:1px;background:#b4b4b4;"></div>
<div style="left:26px;top:644px;width:1239px;height:1px;background:#d3d3d3;"></div>
<div style="left:0px;top:644px;width:25px;height:1px;background:#b4b4b4;"></div>
<div style="left:26px;top:659px;width:1239px;height:1px;background:#d3d3d3;"></div>
<div style="left:0px;top:659px;width:25px;height:1px;background:#b4b4b4;"></div>
<div style="left:26px;top:674px;width:1239px;height:1px;background:#d3d3d3;"></div>
<div style="left:0px;top:674px;width:25px;height:1px;background:#b4b4b4;"></div>
<div style="left:26px;top:689px;width:1239px;height:1px;background:#d3d3d3;"></div>
<div style="left:0px;top:689px;width:25px;height:1px;background:#b4b4b4;"></div>
<div style="left:26px;top:704px;width:1239px;height:1px;background:#d3d3d3;"></div>
<div style="left:0px;top:704px;width:25px;height:1px;background:#b4b4b4;"></div>
<div style="left:26px;top:719px;width:1239px;height:1px;background:#d3d3d3;"></div>
<div style="left:0px;top:719px;width:25px;height:1px;background:#b4b4b4;"></div>
<div style="left:26px;top:734px;width:1239px;height:1px;background:#d3d3d3;"></div>
<div style="left:0px;top:734px;width:25px;height:1px;background:#b4b4b4;"></div>
<div style="left:26px;top:749px;width:1239px;height:1px;background:#d3d3d3;"></div>
<div style="left:0px;top:749px;width:25px;height:1px;background:#b4b4b4;"></div>
<div style="left:26px;top:764px;width:1239px;height:1px;background:#d3d3d3;"></div>
<div style="left:0px;top:764px;width:25px;height:1px;background:#b4b4b4;"></div>
<div style="left:172px;top:254px;width:69px;height:517px;background:#eeeeee;"></div>
<div style="left:379px;top:254px;width:62px;height:517px;background:#eeeeee;"></div>
<div style="left:442px;top:254px;width:65px;height:517px;background:#eeeeee;"></div>
<div style="left:26px;top:224px;width:1239px;height:29px;background:#bebebe;"></div>
<div style="left:0px;top:223px;width:1265px;height:1px;background:#9e9e9e;"></div>
<div style="left:0px;top:224px;width:25px;height:30px;background:#d4d4d4;"></div>
<div style="left:0px;top:254px;width:25px;height:1px;background:#a8a8a8;"></div>
<div style="left:26px;top:204px;width:64px;height:19px;background:#d2d2d2;"></div>
<div class="ch" style="left:26px;width:64px;color:#217346">A</div>
<div style="left:90px;top:205px;width:1px;height:18px;background:#ababab;"></div>
<div class="ch" style="left:91px;width:80px;color:#2a2a2a">B</div>
<div style="left:171px;top:205px;width:1px;height:18px;background:#ababab;"></div>
<div class="ch" style="left:172px;width:69px;color:#2a2a2a">C</div>
<div style="left:241px;top:205px;width:1px;height:18px;background:#ababab;"></div>
<div class="ch" style="left:242px;width:73px;color:#2a2a2a">D</div>
<div style="left:315px;top:205px;width:1px;height:18px;background:#ababab;"></div>
<div class="ch" style="left:316px;width:62px;color:#2a2a2a">E</div>
<div style="left:378px;top:205px;width:1px;height:18px;background:#ababab;"></div>
<div class="ch" style="left:379px;width:62px;color:#2a2a2a">F</div>
<div style="left:441px;top:205px;width:1px;height:18px;background:#ababab;"></div>
<div class="ch" style="left:442px;width:65px;color:#2a2a2a">G</div>
<div style="left:507px;top:205px;width:1px;height:18px;background:#ababab;"></div>
<div class="ch" style="left:508px;width:336px;color:#2a2a2a">H</div>
<div style="left:844px;top:205px;width:1px;height:18px;background:#ababab;"></div>
<div class="ch" style="left:845px;width:377px;color:#2a2a2a">I</div>
<div style="left:1222px;top:205px;width:1px;height:18px;background:#ababab;"></div>
<div style="left:25px;top:205px;width:1px;height:18px;background:#ababab;"></div>
<svg style="left:10px;top:208px" width="13" height="13" viewBox="0 0 13 13"><path d="M12 0.5v11.5H0.5z" fill="#b5b5b5"/></svg>
<div style="left:25px;top:224px;width:1px;height:547px;background:#a0a0a0;"></div>
<div style="left:90px;top:224px;width:1px;height:29px;background:#000;"></div>
<div style="left:90px;top:255px;width:1px;height:516px;background:#000;"></div>
<div style="left:171px;top:224px;width:1px;height:29px;background:#000;"></div>
<div style="left:171px;top:255px;width:1px;height:516px;background:#000;"></div>
<div style="left:241px;top:224px;width:1px;height:29px;background:#000;"></div>
<div style="left:241px;top:255px;width:1px;height:516px;background:#000;"></div>
<div style="left:315px;top:224px;width:1px;height:29px;background:#000;"></div>
<div style="left:315px;top:255px;width:1px;height:516px;background:#000;"></div>
<div style="left:378px;top:224px;width:1px;height:29px;background:#000;"></div>
<div style="left:378px;top:255px;width:1px;height:516px;background:#000;"></div>
<div style="left:441px;top:224px;width:1px;height:29px;background:#000;"></div>
<div style="left:441px;top:255px;width:1px;height:516px;background:#000;"></div>
<div style="left:507px;top:224px;width:1px;height:29px;background:#000;"></div>
<div style="left:507px;top:255px;width:1px;height:516px;background:#000;"></div>
<div style="left:844px;top:224px;width:1px;height:29px;background:#000;"></div>
<div style="left:844px;top:255px;width:1px;height:516px;background:#000;"></div>
<div style="left:1222px;top:224px;width:1px;height:29px;background:#000;"></div>
<div style="left:1222px;top:255px;width:1px;height:516px;background:#000;"></div>
<div style="left:26px;top:253px;width:1239px;height:1px;background:#000;"></div>
<div class="rh" style="top:237px;color:#217346">1</div>
<div class="rh" style="top:253px;height:17px">2</div>
<div class="rh" style="top:268px;height:17px">3</div>
<div class="rh" style="top:283px;height:17px">4</div>
<div class="rh" style="top:298px;height:17px">5</div>
<div class="rh" style="top:313px;height:17px">6</div>
<div class="rh" style="top:328px;height:17px">7</div>
<div class="rh" style="top:343px;height:17px">8</div>
<div class="rh" style="top:358px;height:17px">9</div>
<div class="rh" style="top:373px;height:17px">10</div>
<div class="rh" style="top:388px;height:17px">11</div>
<div class="rh" style="top:403px;height:17px">12</div>
<div class="rh" style="top:418px;height:17px">13</div>
<div class="rh" style="top:433px;height:17px">14</div>
<div class="rh" style="top:448px;height:17px">15</div>
<div class="rh" style="top:463px;height:17px">16</div>
<div class="rh" style="top:478px;height:17px">17</div>
<div class="rh" style="top:493px;height:17px">18</div>
<div class="rh" style="top:508px;height:17px">19</div>
<div class="rh" style="top:523px;height:17px">20</div>
<div class="rh" style="top:538px;height:17px">21</div>
<div class="rh" style="top:553px;height:17px">22</div>
<div class="rh" style="top:568px;height:17px">23</div>
<div class="rh" style="top:583px;height:17px">24</div>
<div class="rh" style="top:598px;height:17px">25</div>
<div class="rh" style="top:613px;height:17px">26</div>
<div class="rh" style="top:628px;height:17px">27</div>
<div class="rh" style="top:643px;height:17px">28</div>
<div class="rh" style="top:658px;height:17px">29</div>
<div class="rh" style="top:673px;height:17px">30</div>
<div class="rh" style="top:688px;height:17px">31</div>
<div class="rh" style="top:703px;height:17px">32</div>
<div class="rh" style="top:718px;height:17px">33</div>
<div class="rh" style="top:733px;height:17px">34</div>
<div class="rh" style="top:748px;height:17px">35</div>
<div class="rh" style="top:763px;height:8px">36</div>
<span class="t" style="left:44.90px;top:228px;font-size:10px;color:#000;letter-spacing:0.330px;text-rendering:geometricPrecision;">Beleg</span>
<span class="t" style="left:51.10px;top:243px;font-size:10px;color:#000;letter-spacing:0.609px;text-rendering:geometricPrecision;">Nr.</span>
<div class="fb" style="left:73px;top:236px"><svg style="left:3px;top:6px" width="9" height="5" viewBox="0 0 9 5"><path d="M0.6 0.3h7.4L4.3 4.3z" fill="#5e5e5e"/></svg></div>
<span class="t" style="left:109.40px;top:228px;font-size:10px;color:#000;letter-spacing:0.294px;text-rendering:geometricPrecision;">Zahlungs</span>
<span class="t" style="left:113.00px;top:243px;font-size:10px;color:#000;letter-spacing:0.728px;text-rendering:geometricPrecision;">Datum*</span>
<div class="fb" style="left:154px;top:236px"><svg style="left:2px;top:3px" width="13" height="11" viewBox="0 0 13 11"><path d="M1 6.3h5.6L3.8 9.3z" fill="#5e5e5e"/><path d="M9.5 8.5V1.2M8 3L9.5 1.2 11 3" fill="none" stroke="#555" stroke-width="1"/></svg></div>
<span class="t" style="left:191.20px;top:236px;font-size:10px;color:#000;letter-spacing:0.876px;text-rendering:geometricPrecision;">Monat</span>
<div class="fb" style="left:224px;top:236px"><svg style="left:3px;top:6px" width="9" height="5" viewBox="0 0 9 5"><path d="M0.6 0.3h7.4L4.3 4.3z" fill="#5e5e5e"/></svg></div>
<span class="t" style="left:261.30px;top:236px;font-size:10px;color:#000;letter-spacing:0.637px;text-rendering:geometricPrecision;">Brutto*</span>
<div class="fb" style="left:298px;top:236px"><svg style="left:3px;top:6px" width="9" height="5" viewBox="0 0 9 5"><path d="M0.6 0.3h7.4L4.3 4.3z" fill="#5e5e5e"/></svg></div>
<span class="t" style="left:338.00px;top:228px;font-size:10px;color:#000;letter-spacing:-0.218px;text-rendering:geometricPrecision;">USt.</span>
<span class="t" style="left:334.40px;top:243px;font-size:10px;color:#000;letter-spacing:0.323px;text-rendering:geometricPrecision;">Satz*</span>
<div class="fb" style="left:361px;top:236px"><svg style="left:3px;top:6px" width="9" height="5" viewBox="0 0 9 5"><path d="M0.6 0.3h7.4L4.3 4.3z" fill="#5e5e5e"/></svg></div>
<span class="t" style="left:400.10px;top:236px;font-size:10px;color:#000;letter-spacing:-0.184px;text-rendering:geometricPrecision;">USt.</span>
<div class="fb" style="left:424px;top:236px"><svg style="left:3px;top:6px" width="9" height="5" viewBox="0 0 9 5"><path d="M0.6 0.3h7.4L4.3 4.3z" fill="#5e5e5e"/></svg></div>
<span class="t" style="left:461.40px;top:236px;font-size:10px;color:#000;letter-spacing:0.773px;text-rendering:geometricPrecision;">Netto</span>
<div class="fb" style="left:490px;top:236px"><svg style="left:3px;top:6px" width="9" height="5" viewBox="0 0 9 5"><path d="M0.6 0.3h7.4L4.3 4.3z" fill="#5e5e5e"/></svg></div>
<span class="t" style="left:509.70px;top:236px;font-size:10px;color:#000;letter-spacing:0.392px;text-rendering:geometricPrecision;">Buchungstext*</span>
<div class="fb" style="left:827px;top:236px"><svg style="left:3px;top:6px" width="9" height="5" viewBox="0 0 9 5"><path d="M0.6 0.3h7.4L4.3 4.3z" fill="#5e5e5e"/></svg></div>
<span class="t" style="left:847.20px;top:228px;font-size:10px;color:#000;letter-spacing:0.222px;text-rendering:geometricPrecision;">Ausgaben-Art</span>
<span class="t" style="left:847.20px;top:243px;font-size:10px;color:#000;letter-spacing:0.336px;text-rendering:geometricPrecision;">für die Tabelle </span>
<span class="t" style="left:915.90px;top:243px;font-size:10px;color:#000;letter-spacing:-0.539px;font-weight:bold;text-rendering:geometricPrecision;">EÜR*</span>
<div class="fb" style="left:1205px;top:236px"><svg style="left:3px;top:6px" width="9" height="5" viewBox="0 0 9 5"><path d="M0.6 0.3h7.4L4.3 4.3z" fill="#5e5e5e"/></svg></div>
<div class="c hh" style="left:1225.5px;top:224px;width:39.5px;height:29px;line-height:15px;overflow:hidden;padding-top:1px">Ausgaben-Art<br>für die Tabelle</div>
<div class="c n" style="left:91px;top:255px;width:80px;text-align:center;">01.01.2018</div>
<div class="c n" style="left:172px;top:255px;width:69px;text-align:center;">1</div>
<div class="c n" style="left:242px;top:255px;width:68.7px;text-align:right;">1.000,00 €</div>
<div class="c n" style="left:316px;top:255px;width:62px;text-align:center;">0%</div>
<div class="c n" style="left:379px;top:255px;width:37.7px;text-align:right;">-</div>
<div class="c n" style="left:379px;top:255px;width:57.7px;text-align:right;">€</div>
<div class="c n" style="left:442px;top:255px;width:60.7px;text-align:right;">1.000,00 €</div>
<div class="c" style="left:510px;top:255px;width:334px;text-align:left;">Versicherung</div>
<div class="c ci" style="left:847.5px;top:255px;width:374.5px;text-align:left;">Kfz: Steuern, Versicherung, Maut</div>
<div class="c ci" style="left:1225.5px;top:255px;width:39.5px;text-align:left;">Kraftfahrzeugkosten</div>
<div class="c n" style="left:91px;top:270px;width:80px;text-align:center;">01.01.2018</div>
<div class="c n" style="left:172px;top:270px;width:69px;text-align:center;">1</div>
<div class="c n" style="left:242px;top:270px;width:68.7px;text-align:right;">357,00 €</div>
<div class="c n" style="left:316px;top:270px;width:62px;text-align:center;">19%</div>
<div class="c n" style="left:379px;top:270px;width:57.7px;text-align:right;">57,00 €</div>
<div class="c n" style="left:442px;top:270px;width:60.7px;text-align:right;">300,00 €</div>
<div class="c" style="left:510px;top:270px;width:334px;text-align:left;">Reparatur</div>
<div class="c ci" style="left:847.5px;top:270px;width:374.5px;text-align:left;">Sonstige tatsächliche Fahrtkosten</div>
<div class="c ci" style="left:1225.5px;top:270px;width:39.5px;text-align:left;">Kraftfahrzeugkosten</div>
<div class="c n" style="left:91px;top:285px;width:80px;text-align:center;">01.01.2018</div>
<div class="c n" style="left:172px;top:285px;width:69px;text-align:center;">1</div>
<div class="c n" style="left:242px;top:285px;width:68.7px;text-align:right;">100,00 €</div>
<div class="c n" style="left:316px;top:285px;width:62px;text-align:center;">0%</div>
<div class="c n" style="left:379px;top:285px;width:37.7px;text-align:right;">-</div>
<div class="c n" style="left:379px;top:285px;width:57.7px;text-align:right;">€</div>
<div class="c n" style="left:442px;top:285px;width:60.7px;text-align:right;">100,00 €</div>
<div class="c" style="left:510px;top:285px;width:334px;text-align:left;">Steuern</div>
<div class="c ci" style="left:847.5px;top:285px;width:374.5px;text-align:left;">Kfz: Steuern, Versicherung, Maut</div>
<div class="c ci" style="left:1225.5px;top:285px;width:39.5px;text-align:left;">Kraftfahrzeugkosten</div>
<div class="c n" style="left:91px;top:300px;width:80px;text-align:center;">01.01.2018</div>
<div class="c n" style="left:172px;top:300px;width:69px;text-align:center;">1</div>
<div class="c n" style="left:242px;top:300px;width:68.7px;text-align:right;">59,50 €</div>
<div class="c n" style="left:316px;top:300px;width:62px;text-align:center;">19%</div>
<div class="c n" style="left:379px;top:300px;width:57.7px;text-align:right;">9,50 €</div>
<div class="c n" style="left:442px;top:300px;width:60.7px;text-align:right;">50,00 €</div>
<div class="c" style="left:510px;top:300px;width:334px;text-align:left;">Tanken</div>
<div class="c ci" style="left:847.5px;top:300px;width:374.5px;text-align:left;">Sonstige tatsächliche Fahrtkosten</div>
<div class="c ci" style="left:1225.5px;top:300px;width:39.5px;text-align:left;">Kraftfahrzeugkosten</div>
<div class="c n" style="left:91px;top:315px;width:80px;text-align:center;">02.02.2018</div>
<div class="c n" style="left:172px;top:315px;width:69px;text-align:center;">2</div>
<div class="c n" style="left:242px;top:315px;width:68.7px;text-align:right;">7.140,00 €</div>
<div class="c n" style="left:316px;top:315px;width:62px;text-align:center;">19%</div>
<div class="c n" style="left:379px;top:315px;width:57.7px;text-align:right;">1.140,00 €</div>
<div class="c n" style="left:442px;top:315px;width:60.7px;text-align:right;">6.000,00 €</div>
<div class="c" style="left:510px;top:315px;width:334px;text-align:left;">Projekt-Manager für Umsetzung Projekt 1</div>
<div class="c ci" style="left:847.5px;top:315px;width:374.5px;text-align:left;">Fremdleistungen</div>
<div class="c ci" style="left:1225.5px;top:315px;width:39.5px;text-align:left;">Fremdleistungen</div>
<div class="c n" style="left:91px;top:330px;width:80px;text-align:center;">16.03.2018</div>
<div class="c n" style="left:172px;top:330px;width:69px;text-align:center;">3</div>
<div class="c n" style="left:242px;top:330px;width:68.7px;text-align:right;">238,00 €</div>
<div class="c n" style="left:316px;top:330px;width:62px;text-align:center;">19%</div>
<div class="c n" style="left:379px;top:330px;width:57.7px;text-align:right;">38,00 €</div>
<div class="c n" style="left:442px;top:330px;width:60.7px;text-align:right;">200,00 €</div>
<div class="c" style="left:510px;top:330px;width:334px;text-align:left;">Hotelrechnung für Kundentermin / Projekt 1 Umsetzung</div>
<div class="c ci" style="left:847.5px;top:330px;width:374.5px;text-align:left;">Übernachtungs- und Reisenebenkosten bei Geschäftsreisen</div>
<div class="c ci" style="left:1225.5px;top:330px;width:39.5px;text-align:left;">Übernachtungskosten</div>
<div class="c n" style="left:91px;top:345px;width:80px;text-align:center;">01.04.2018</div>
<div class="c n" style="left:172px;top:345px;width:69px;text-align:center;">4</div>
<div class="c n" style="left:242px;top:345px;width:68.7px;text-align:right;">119,00 €</div>
<div class="c n" style="left:316px;top:345px;width:62px;text-align:center;">19%</div>
<div class="c n" style="left:379px;top:345px;width:57.7px;text-align:right;">19,00 €</div>
<div class="c n" style="left:442px;top:345px;width:60.7px;text-align:right;">100,00 €</div>
<div class="c" style="left:510px;top:345px;width:334px;text-align:left;">Mobilfunk</div>
<div class="c ci" style="left:847.5px;top:345px;width:374.5px;text-align:left;">Telekommunikationskosten</div>
<div class="c ci" style="left:1225.5px;top:345px;width:39.5px;text-align:left;">Telekommunikation</div>
<div class="c n" style="left:91px;top:360px;width:80px;text-align:center;">01.04.2018</div>
<div class="c n" style="left:172px;top:360px;width:69px;text-align:center;">4</div>
<div class="c n" style="left:242px;top:360px;width:68.7px;text-align:right;">59,50 €</div>
<div class="c n" style="left:316px;top:360px;width:62px;text-align:center;">19%</div>
<div class="c n" style="left:379px;top:360px;width:57.7px;text-align:right;">9,50 €</div>
<div class="c n" style="left:442px;top:360px;width:60.7px;text-align:right;">50,00 €</div>
<div class="c" style="left:510px;top:360px;width:334px;text-align:left;">Festnetz / Internet</div>
<div class="c ci" style="left:847.5px;top:360px;width:374.5px;text-align:left;">Telekommunikationskosten</div>
<div class="c ci" style="left:1225.5px;top:360px;width:39.5px;text-align:left;">Telekommunikation</div>
<div class="c n" style="left:91px;top:375px;width:80px;text-align:center;">01.07.2018</div>
<div class="c n" style="left:172px;top:375px;width:69px;text-align:center;">7</div>
<div class="c n" style="left:242px;top:375px;width:68.7px;text-align:right;">35,70 €</div>
<div class="c n" style="left:316px;top:375px;width:62px;text-align:center;">19%</div>
<div class="c n" style="left:379px;top:375px;width:57.7px;text-align:right;">5,70 €</div>
<div class="c n" style="left:442px;top:375px;width:60.7px;text-align:right;">30,00 €</div>
<div class="c" style="left:510px;top:375px;width:334px;text-align:left;">Schreibtischlampe</div>
<div class="c ci" style="left:847.5px;top:375px;width:374.5px;text-align:left;">übrige, unbeschränkt abziehbare Betriebsausgaben</div>
<div class="c ci" style="left:1225.5px;top:375px;width:39.5px;text-align:left;">übrige Betriebsausgaben</div>
<div class="c n" style="left:91px;top:390px;width:80px;text-align:center;">01.08.2018</div>
<div class="c n" style="left:172px;top:390px;width:69px;text-align:center;">8</div>
<div class="c n" style="left:242px;top:390px;width:68.7px;text-align:right;">476,00 €</div>
<div class="c n" style="left:316px;top:390px;width:62px;text-align:center;">19%</div>
<div class="c n" style="left:379px;top:390px;width:57.7px;text-align:right;">76,00 €</div>
<div class="c n" style="left:442px;top:390px;width:60.7px;text-align:right;">400,00 €</div>
<div class="c" style="left:510px;top:390px;width:334px;text-align:left;">Kopiergeräte - Variante 2</div>
<div class="c ci" style="left:847.5px;top:390px;width:374.5px;text-align:left;">Geringwertige Wirtschaftsgüter (GWG)</div>
<div class="c ci" style="left:1225.5px;top:390px;width:39.5px;text-align:left;">Geringwertige Güter</div>
<div class="c n" style="left:91px;top:405px;width:80px;text-align:center;">01.10.2018</div>
<div class="c n" style="left:172px;top:405px;width:69px;text-align:center;">10</div>
<div class="c n" style="left:242px;top:405px;width:68.7px;text-align:right;">357,00 €</div>
<div class="c n" style="left:316px;top:405px;width:62px;text-align:center;">19%</div>
<div class="c n" style="left:379px;top:405px;width:57.7px;text-align:right;">57,00 €</div>
<div class="c n" style="left:442px;top:405px;width:60.7px;text-align:right;">300,00 €</div>
<div class="c" style="left:510px;top:405px;width:334px;text-align:left;">Seminarkosten "Denken wie ein Unternehmer"</div>
<div class="c ci" style="left:847.5px;top:405px;width:374.5px;text-align:left;">Fortbildungskosten (ohne Reisekosten)</div>
<div class="c ci" style="left:1225.5px;top:405px;width:39.5px;text-align:left;">Fortbildungskosten</div>
<div class="c n" style="left:91px;top:420px;width:80px;text-align:center;">20.10.2018</div>
<div class="c n" style="left:172px;top:420px;width:69px;text-align:center;">10</div>
<div class="c n" style="left:242px;top:420px;width:68.7px;text-align:right;">150,00 €</div>
<div class="c n" style="left:316px;top:420px;width:62px;text-align:center;">0%</div>
<div class="c n" style="left:379px;top:420px;width:37.7px;text-align:right;">-</div>
<div class="c n" style="left:379px;top:420px;width:57.7px;text-align:right;">€</div>
<div class="c n" style="left:442px;top:420px;width:60.7px;text-align:right;">150,00 €</div>
<div class="c" style="left:510px;top:420px;width:334px;text-align:left;">Zugticket Leipzig-Wien</div>
<div class="c ci" style="left:847.5px;top:420px;width:374.5px;text-align:left;">Sonstige tatsächliche Fahrtkosten</div>
<div class="c ci" style="left:1225.5px;top:420px;width:39.5px;text-align:left;">Fahrtkosten</div>
<div class="c n" style="left:91px;top:435px;width:80px;text-align:center;">27.10.2018</div>
<div class="c n" style="left:172px;top:435px;width:69px;text-align:center;">10</div>
<div class="c n" style="left:242px;top:435px;width:68.7px;text-align:right;">119,00 €</div>
<div class="c n" style="left:316px;top:435px;width:62px;text-align:center;">19%</div>
<div class="c n" style="left:379px;top:435px;width:57.7px;text-align:right;">19,00 €</div>
<div class="c n" style="left:442px;top:435px;width:60.7px;text-align:right;">100,00 €</div>
<div class="c" style="left:510px;top:435px;width:334px;text-align:left;">Leihwagen / Wien - Erfurt</div>
<div class="c ci" style="left:847.5px;top:435px;width:374.5px;text-align:left;">Sonstige tatsächliche Fahrtkosten</div>
<div class="c ci" style="left:1225.5px;top:435px;width:39.5px;text-align:left;">Fahrtkosten</div>
<div class="c n" style="left:91px;top:450px;width:80px;text-align:center;">01.11.2018</div>
<div class="c n" style="left:172px;top:450px;width:69px;text-align:center;">11</div>
<div class="c n" style="left:242px;top:450px;width:68.7px;text-align:right;">595,00 €</div>
<div class="c n" style="left:316px;top:450px;width:62px;text-align:center;">19%</div>
<div class="c n" style="left:379px;top:450px;width:57.7px;text-align:right;">95,00 €</div>
<div class="c n" style="left:442px;top:450px;width:60.7px;text-align:right;">500,00 €</div>
<div class="c" style="left:510px;top:450px;width:334px;text-align:left;">Einkauf Software für IT-Schulung / 5 Lizenzen</div>
<div class="c ci" style="left:847.5px;top:450px;width:374.5px;text-align:left;">Waren, Rohstoffe, Hilfsstoffe</div>
<div class="c ci" style="left:1225.5px;top:450px;width:39.5px;text-align:left;">Waren, Rohstoffe</div>
<div class="c n" style="left:91px;top:465px;width:80px;text-align:center;">15.12.2018</div>
<div class="c n" style="left:172px;top:465px;width:69px;text-align:center;">12</div>
<div class="c n" style="left:242px;top:465px;width:68.7px;text-align:right;">1.000,00 €</div>
<div class="c n" style="left:316px;top:465px;width:62px;text-align:center;">0%</div>
<div class="c n" style="left:379px;top:465px;width:37.7px;text-align:right;">-</div>
<div class="c n" style="left:379px;top:465px;width:57.7px;text-align:right;">€</div>
<div class="c n" style="left:442px;top:465px;width:60.7px;text-align:right;">1.000,00 €</div>
<div class="c" style="left:510px;top:465px;width:334px;text-align:left;">Lohn Dezember Herr Mustermann</div>
<div class="c ci" style="left:847.5px;top:465px;width:374.5px;text-align:left;">Personalkosten</div>
<div class="c ci" style="left:1225.5px;top:465px;width:39.5px;text-align:left;">Personalkosten</div>
<div class="c n" style="left:91px;top:480px;width:80px;text-align:center;">15.12.2018</div>
<div class="c n" style="left:172px;top:480px;width:69px;text-align:center;">12</div>
<div class="c n" style="left:242px;top:480px;width:68.7px;text-align:right;">595,00 €</div>
<div class="c n" style="left:316px;top:480px;width:62px;text-align:center;">19%</div>
<div class="c n" style="left:379px;top:480px;width:57.7px;text-align:right;">95,00 €</div>
<div class="c n" style="left:442px;top:480px;width:60.7px;text-align:right;">500,00 €</div>
<div class="c" style="left:510px;top:480px;width:334px;text-align:left;">Büromiete</div>
<div class="c ci" style="left:847.5px;top:480px;width:374.5px;text-align:left;">Raumkosten - Miete / Pacht für Geschäftsräume &amp; betriebl. genutzte Grundst.</div>
<div class="c ci" style="left:1225.5px;top:480px;width:39.5px;text-align:left;">Raumkosten</div>
<div class="c n" style="left:91px;top:495px;width:80px;text-align:center;">15.12.2018</div>
<div class="c n" style="left:172px;top:495px;width:69px;text-align:center;">12</div>
<div class="c n" style="left:242px;top:495px;width:68.7px;text-align:right;">476,00 €</div>
<div class="c n" style="left:316px;top:495px;width:62px;text-align:center;">19%</div>
<div class="c n" style="left:379px;top:495px;width:57.7px;text-align:right;">76,00 €</div>
<div class="c n" style="left:442px;top:495px;width:60.7px;text-align:right;">400,00 €</div>
<div class="c" style="left:510px;top:495px;width:334px;text-align:left;">Rechtsberatung Notar Dr. Recht</div>
<div class="c ci" style="left:847.5px;top:495px;width:374.5px;text-align:left;">Rechts- &amp; Steuerberatung, Buchführung</div>
<div class="c ci" style="left:1225.5px;top:495px;width:39.5px;text-align:left;">Rechts- &amp; Steuerberatung</div>
<div class="c n" style="left:91px;top:510px;width:80px;text-align:center;">15.12.2018</div>
<div class="c n" style="left:172px;top:510px;width:69px;text-align:center;">12</div>
<div class="c n" style="left:242px;top:510px;width:68.7px;text-align:right;">300,00 €</div>
<div class="c n" style="left:316px;top:510px;width:62px;text-align:center;">0%</div>
<div class="c n" style="left:379px;top:510px;width:37.7px;text-align:right;">-</div>
<div class="c n" style="left:379px;top:510px;width:57.7px;text-align:right;">€</div>
<div class="c n" style="left:442px;top:510px;width:60.7px;text-align:right;">300,00 €</div>
<div class="c" style="left:510px;top:510px;width:334px;text-align:left;">Betriebshaftpflichtversicherung</div>
<div class="c ci" style="left:847.5px;top:510px;width:374.5px;text-align:left;">Beiträge, Gebühren, Abgaben, Versich. (ohne Gebäude und Kfz)</div>
<div class="c ci" style="left:1225.5px;top:510px;width:39.5px;text-align:left;">Beiträge, Gebühren</div>
<div class="c n" style="left:91px;top:525px;width:80px;text-align:center;">15.12.2018</div>
<div class="c n" style="left:172px;top:525px;width:69px;text-align:center;">12</div>
<div class="c n" style="left:242px;top:525px;width:68.7px;text-align:right;">357,00 €</div>
<div class="c n" style="left:316px;top:525px;width:62px;text-align:center;">19%</div>
<div class="c n" style="left:379px;top:525px;width:57.7px;text-align:right;">57,00 €</div>
<div class="c n" style="left:442px;top:525px;width:60.7px;text-align:right;">300,00 €</div>
<div class="c" style="left:510px;top:525px;width:334px;text-align:left;">Design + Druck Visitenkarten</div>
<div class="c ci" style="left:847.5px;top:525px;width:374.5px;text-align:left;">Werbekosten</div>
<div class="c ci" style="left:1225.5px;top:525px;width:39.5px;text-align:left;">Werbekosten</div>
<div class="c n" style="left:91px;top:540px;width:80px;text-align:center;">15.12.2018</div>
<div class="c n" style="left:172px;top:540px;width:69px;text-align:center;">12</div>
<div class="c n" style="left:242px;top:540px;width:68.7px;text-align:right;">59,50 €</div>
<div class="c n" style="left:316px;top:540px;width:62px;text-align:center;">19%</div>
<div class="c n" style="left:379px;top:540px;width:57.7px;text-align:right;">9,50 €</div>
<div class="c n" style="left:442px;top:540px;width:60.7px;text-align:right;">50,00 €</div>
<div class="c" style="left:510px;top:540px;width:334px;text-align:left;">Leasing Beamer</div>
<div class="c ci" style="left:847.5px;top:540px;width:374.5px;text-align:left;">Miete / Leasing für bewegliche Wirtschaftsgüter (ohne Kfz)</div>
<div class="c ci" style="left:1225.5px;top:540px;width:39.5px;text-align:left;">Miete / Leasing</div>
<div class="c n" style="left:91px;top:555px;width:80px;text-align:center;">15.12.2018</div>
<div class="c n" style="left:172px;top:555px;width:69px;text-align:center;">12</div>
<div class="c n" style="left:242px;top:555px;width:68.7px;text-align:right;">2,00 €</div>
<div class="c n" style="left:316px;top:555px;width:62px;text-align:center;">0%</div>
<div class="c n" style="left:379px;top:555px;width:37.7px;text-align:right;">-</div>
<div class="c n" style="left:379px;top:555px;width:57.7px;text-align:right;">€</div>
<div class="c n" style="left:442px;top:555px;width:60.7px;text-align:right;">2,00 €</div>
<div class="c" style="left:510px;top:555px;width:334px;text-align:left;">Kontoführungsgebühren</div>
<div class="c ci" style="left:847.5px;top:555px;width:374.5px;text-align:left;">übrige, unbeschränkt abziehbare Betriebsausgaben</div>
<div class="c ci" style="left:1225.5px;top:555px;width:39.5px;text-align:left;">übrige Betriebsausgaben</div>
<div class="c n" style="left:172px;top:570px;width:69px;text-align:center;height:15px;">0</div>
<div class="c n" style="left:379px;top:570px;width:37.7px;text-align:right;height:15px;">-</div>
<div class="c n" style="left:379px;top:570px;width:57.7px;text-align:right;height:15px;">€</div>
<div class="c n" style="left:442px;top:570px;width:40.7px;text-align:right;height:15px;">-</div>
<div class="c n" style="left:442px;top:570px;width:60.7px;text-align:right;height:15px;">€</div>
<div class="c n" style="left:172px;top:585px;width:69px;text-align:center;height:15px;">0</div>
<div class="c n" style="left:379px;top:585px;width:37.7px;text-align:right;height:15px;">-</div>
<div class="c n" style="left:379px;top:585px;width:57.7px;text-align:right;height:15px;">€</div>
<div class="c n" style="left:442px;top:585px;width:40.7px;text-align:right;height:15px;">-</div>
<div class="c n" style="left:442px;top:585px;width:60.7px;text-align:right;height:15px;">€</div>
<div class="c n" style="left:172px;top:600px;width:69px;text-align:center;height:15px;">0</div>
<div class="c n" style="left:379px;top:600px;width:37.7px;text-align:right;height:15px;">-</div>
<div class="c n" style="left:379px;top:600px;width:57.7px;text-align:right;height:15px;">€</div>
<div class="c n" style="left:442px;top:600px;width:40.7px;text-align:right;height:15px;">-</div>
<div class="c n" style="left:442px;top:600px;width:60.7px;text-align:right;height:15px;">€</div>
<div class="c n" style="left:172px;top:615px;width:69px;text-align:center;height:15px;">0</div>
<div class="c n" style="left:379px;top:615px;width:37.7px;text-align:right;height:15px;">-</div>
<div class="c n" style="left:379px;top:615px;width:57.7px;text-align:right;height:15px;">€</div>
<div class="c n" style="left:442px;top:615px;width:40.7px;text-align:right;height:15px;">-</div>
<div class="c n" style="left:442px;top:615px;width:60.7px;text-align:right;height:15px;">€</div>
<div class="c n" style="left:172px;top:630px;width:69px;text-align:center;height:15px;">0</div>
<div class="c n" style="left:379px;top:630px;width:37.7px;text-align:right;height:15px;">-</div>
<div class="c n" style="left:379px;top:630px;width:57.7px;text-align:right;height:15px;">€</div>
<div class="c n" style="left:442px;top:630px;width:40.7px;text-align:right;height:15px;">-</div>
<div class="c n" style="left:442px;top:630px;width:60.7px;text-align:right;height:15px;">€</div>
<div class="c n" style="left:172px;top:645px;width:69px;text-align:center;height:15px;">0</div>
<div class="c n" style="left:379px;top:645px;width:37.7px;text-align:right;height:15px;">-</div>
<div class="c n" style="left:379px;top:645px;width:57.7px;text-align:right;height:15px;">€</div>
<div class="c n" style="left:442px;top:645px;width:40.7px;text-align:right;height:15px;">-</div>
<div class="c n" style="left:442px;top:645px;width:60.7px;text-align:right;height:15px;">€</div>
<div class="c n" style="left:172px;top:660px;width:69px;text-align:center;height:15px;">0</div>
<div class="c n" style="left:379px;top:660px;width:37.7px;text-align:right;height:15px;">-</div>
<div class="c n" style="left:379px;top:660px;width:57.7px;text-align:right;height:15px;">€</div>
<div class="c n" style="left:442px;top:660px;width:40.7px;text-align:right;height:15px;">-</div>
<div class="c n" style="left:442px;top:660px;width:60.7px;text-align:right;height:15px;">€</div>
<div class="c n" style="left:172px;top:675px;width:69px;text-align:center;height:15px;">0</div>
<div class="c n" style="left:379px;top:675px;width:37.7px;text-align:right;height:15px;">-</div>
<div class="c n" style="left:379px;top:675px;width:57.7px;text-align:right;height:15px;">€</div>
<div class="c n" style="left:442px;top:675px;width:40.7px;text-align:right;height:15px;">-</div>
<div class="c n" style="left:442px;top:675px;width:60.7px;text-align:right;height:15px;">€</div>
<div class="c n" style="left:172px;top:690px;width:69px;text-align:center;height:15px;">0</div>
<div class="c n" style="left:379px;top:690px;width:37.7px;text-align:right;height:15px;">-</div>
<div class="c n" style="left:379px;top:690px;width:57.7px;text-align:right;height:15px;">€</div>
<div class="c n" style="left:442px;top:690px;width:40.7px;text-align:right;height:15px;">-</div>
<div class="c n" style="left:442px;top:690px;width:60.7px;text-align:right;height:15px;">€</div>
<div class="c n" style="left:172px;top:705px;width:69px;text-align:center;height:15px;">0</div>
<div class="c n" style="left:379px;top:705px;width:37.7px;text-align:right;height:15px;">-</div>
<div class="c n" style="left:379px;top:705px;width:57.7px;text-align:right;height:15px;">€</div>
<div class="c n" style="left:442px;top:705px;width:40.7px;text-align:right;height:15px;">-</div>
<div class="c n" style="left:442px;top:705px;width:60.7px;text-align:right;height:15px;">€</div>
<div class="c n" style="left:172px;top:720px;width:69px;text-align:center;height:15px;">0</div>
<div class="c n" style="left:379px;top:720px;width:37.7px;text-align:right;height:15px;">-</div>
<div class="c n" style="left:379px;top:720px;width:57.7px;text-align:right;height:15px;">€</div>
<div class="c n" style="left:442px;top:720px;width:40.7px;text-align:right;height:15px;">-</div>
<div class="c n" style="left:442px;top:720px;width:60.7px;text-align:right;height:15px;">€</div>
<div class="c n" style="left:172px;top:735px;width:69px;text-align:center;height:15px;">0</div>
<div class="c n" style="left:379px;top:735px;width:37.7px;text-align:right;height:15px;">-</div>
<div class="c n" style="left:379px;top:735px;width:57.7px;text-align:right;height:15px;">€</div>
<div class="c n" style="left:442px;top:735px;width:40.7px;text-align:right;height:15px;">-</div>
<div class="c n" style="left:442px;top:735px;width:60.7px;text-align:right;height:15px;">€</div>
<div class="c n" style="left:172px;top:750px;width:69px;text-align:center;height:15px;">0</div>
<div class="c n" style="left:379px;top:750px;width:37.7px;text-align:right;height:15px;">-</div>
<div class="c n" style="left:379px;top:750px;width:57.7px;text-align:right;height:15px;">€</div>
<div class="c n" style="left:442px;top:750px;width:40.7px;text-align:right;height:15px;">-</div>
<div class="c n" style="left:442px;top:750px;width:60.7px;text-align:right;height:15px;">€</div>
<div class="c n" style="left:172px;top:765px;width:69px;text-align:center;height:6px;">0</div>
<div class="c n" style="left:379px;top:765px;width:37.7px;text-align:right;height:6px;">-</div>
<div class="c n" style="left:379px;top:765px;width:57.7px;text-align:right;height:6px;">€</div>
<div class="c n" style="left:442px;top:765px;width:40.7px;text-align:right;height:6px;">-</div>
<div class="c n" style="left:442px;top:765px;width:60.7px;text-align:right;height:6px;">€</div>
<div style="left:24px;top:222px;width:68px;height:34px;border:2px solid #217346;box-shadow:inset 0 0 0 1px #eefaf3;"></div>
<div style="left:87px;top:251px;width:7px;height:7px;background:#217346;border:1px solid #f4f4f4;"></div>
<div style="left:1265px;top:204px;width:20px;height:568px;background:#e4e4e4;"></div>
<div style="left:1268px;top:206px;width:15px;height:15px;background:#f4f4f4;border:1px solid #ababab;"></div>
<svg style="left:1272px;top:211px" width="8" height="5" viewBox="0 0 8 5"><path d="M0 4L3.7 0 7.4 4z" fill="#777"/></svg>
<div style="left:1268px;top:221px;width:15px;height:17px;background:#f4f4f4;border:1px solid #ababab;"></div>
<div style="left:1268px;top:756px;width:15px;height:15px;background:#f4f4f4;border:1px solid #ababab;"></div>
<svg style="left:1272px;top:762px" width="8" height="5" viewBox="0 0 8 5"><path d="M0 0h7.4L3.7 4z" fill="#777"/></svg>
<div style="left:0px;top:771px;width:1285px;height:28px;background:#e4e4e4;"></div>
<div style="left:0px;top:771px;width:1264px;height:1px;background:#ababab;"></div>
<div style="left:0px;top:799px;width:1285px;height:1px;background:#c6c6c6;"></div>
<div style="left:0px;top:800px;width:1285px;height:20px;background:#f0f0f0;"></div>
<svg style="left:27px;top:781px" width="5" height="8" viewBox="0 0 5 8"><path d="M4.5 0.3v7L0.3 3.8z" fill="#c0c0c0"/></svg>
<svg style="left:56px;top:781px" width="5" height="8" viewBox="0 0 5 8"><path d="M0.3 0.3v7L4.5 3.8z" fill="#217346"/></svg>
<div style="left:100px;top:775px;width:1px;height:20px;background:#ababab;"></div>
<div style="left:186px;top:775px;width:1px;height:20px;background:#ababab;"></div>
<div style="left:294px;top:775px;width:1px;height:20px;background:#ababab;"></div>
<div style="left:373px;top:775px;width:1px;height:20px;background:#ababab;"></div>
<div style="left:542px;top:775px;width:1px;height:20px;background:#ababab;"></div>
<div style="left:679px;top:775px;width:1px;height:20px;background:#ababab;"></div>
<div style="left:796px;top:775px;width:1px;height:20px;background:#ababab;"></div>
<div style="left:894px;top:775px;width:1px;height:20px;background:#ababab;"></div>
<div style="left:103px;top:774px;width:81px;height:22px;background:#000;"></div>
<span class="t" style="left:113.55px;top:779px;font-size:12.5px;color:#fff;letter-spacing:0.124px;">Lies mich!</span>
<div style="left:189px;top:774px;width:103px;height:22px;background:#000;"></div>
<span class="t" style="left:201.35px;top:779px;font-size:12.5px;color:#fff;letter-spacing:0.178px;">Einstellungen</span>
<div style="left:297px;top:774px;width:74px;height:22px;background:#7030a0;"></div>
<span class="t" style="left:307.45px;top:779px;font-size:12.5px;color:#fff;letter-spacing:0.171px;">Beispiele</span>
<div style="left:376px;top:774px;width:46px;height:22px;background:#f7f712;"></div>
<span class="t" style="left:385.75px;top:779px;font-size:12.5px;color:#222;letter-spacing:-0.144px;">Einn</span>
<div style="left:424px;top:772px;width:56px;height:24px;background:linear-gradient(#f4f4f4 25%,#f5f5cc);border-bottom:2px solid #217346;border-left:1px solid #a8a8a8;border-right:1px solid #a8a8a8;"></div>
<span class="t" style="left:436.05px;top:779px;font-size:12.5px;color:#217346;letter-spacing:-0.150px;font-weight:bold;">Ausg</span>
<div style="left:482px;top:774px;width:58px;height:22px;background:#f7f712;"></div>
<span class="t" style="left:492.85px;top:779px;font-size:12.5px;color:#222;letter-spacing:0.233px;">Bewirt</span>
<div style="left:545px;top:774px;width:132px;height:22px;background:#f7f712;"></div>
<span class="t" style="left:556.45px;top:779px;font-size:12.5px;color:#222;letter-spacing:0.086px;">VPMA - pausch.FK</span>
<div style="left:682px;top:774px;width:112px;height:22px;background:#f7f712;"></div>
<span class="t" style="left:692.95px;top:779px;font-size:12.5px;color:#222;letter-spacing:0.100px;">GWG-Sammelp</span>
<div style="left:799px;top:774px;width:93px;height:22px;background:#f7f712;"></div>
<span class="t" style="left:809.75px;top:779px;font-size:12.5px;color:#222;letter-spacing:0.300px;">Anlageverm</span>
<div style="left:897px;top:774px;width:17px;height:22px;background:#f7f712;overflow:hidden;"><span class="t" style="left:11px;top:4.4px;font-size:12.5px;color:#222">G</span></div>
<div style="left:922px;top:787px;width:2px;height:2px;background:#217346;"></div>
<div style="left:926px;top:787px;width:2px;height:2px;background:#217346;"></div>
<div style="left:930px;top:787px;width:2px;height:2px;background:#217346;"></div>
<svg style="left:945px;top:776px" width="18" height="18" viewBox="0 0 18 18"><circle cx="9" cy="9" r="7.6" fill="none" stroke="#777" stroke-width="1.1"/><path d="M9 5v8M5 9h8" stroke="#777" stroke-width="1.3"/></svg>
<div style="left:982px;top:780px;width:2px;height:2px;background:#b4b4b4;"></div>
<div style="left:982px;top:784px;width:2px;height:2px;background:#b4b4b4;"></div>
<div style="left:982px;top:788px;width:2px;height:2px;background:#b4b4b4;"></div>
<div style="left:1014px;top:778px;width:233px;height:15px;background:#d3d3d3;"></div>
<div style="left:999px;top:778px;width:15px;height:15px;background:#f4f4f4;border:1px solid #ababab;"></div>
<svg style="left:1004px;top:782px" width="6" height="8" viewBox="0 0 6 8"><path d="M4.5 0v7L0.5 3.5z" fill="#777"/></svg>
<div style="left:1014px;top:778px;width:129px;height:15px;background:#f4f4f4;border:1px solid #ababab;"></div>
<div style="left:1249px;top:778px;width:15px;height:15px;background:#f4f4f4;border:1px solid #ababab;"></div>
<svg style="left:1254px;top:782px" width="6" height="8" viewBox="0 0 6 8"><path d="M0.5 0v7L4.5 3.5z" fill="#777"/></svg>
<span class="t" style="left:6.91px;top:805px;font-size:11.5px;color:#444;letter-spacing:0.047px;">Bereit</span>
<div style="left:986px;top:800px;width:38px;height:20px;background:#c8c8c8;"></div>
<svg style="left:998px;top:803px" width="14" height="14" viewBox="0 0 14 14"><path d="M0.5 0.5h12v12h-12zM4.5 0.5v12M8.5 0.5v12M0.5 4.5h12M0.5 8.5h12" fill="none" stroke="#555"/></svg>
<svg style="left:1036px;top:803px" width="15" height="14" viewBox="0 0 15 14"><rect x="0.5" y="0.5" width="13" height="12" fill="none" stroke="#555"/><rect x="3.5" y="3.5" width="7" height="9" fill="none" stroke="#555"/><path d="M5 6.5h4M5 8.5h4M5 10.5h4" stroke="#555"/></svg>
<svg style="left:1074px;top:803px" width="15" height="14" viewBox="0 0 15 14"><rect x="0.5" y="0.5" width="13" height="12" fill="none" stroke="#555"/><path d="M4.5 0.5v6h5v-6M4.5 6.5h-4" fill="none" stroke="#555"/></svg>
<div style="left:1105px;top:810px;width:6px;height:2px;background:#555;"></div>
<div style="left:1115px;top:810px;width:100px;height:1px;background:#8a8a8a;"></div>
<div style="left:1163px;top:804px;width:4px;height:11px;background:#555;"></div>
<div style="left:1218px;top:810px;width:8px;height:2px;background:#555;"></div>
<div style="left:1221px;top:807px;width:2px;height:8px;background:#555;"></div>
<span class="t" style="left:1235.91px;top:805px;font-size:11.5px;color:#444;letter-spacing:-0.557px;">100 %</span>
<div style="left:0px;top:65px;width:1285px;height:1px;background:#e4f6ec;"></div>
<div style="left:61px;top:65px;width:51px;height:1px;background:#f0f0f0;"></div>
<div style="left:0px;top:0px;width:1285px;height:1px;background:#bfe6d0;"></div>
<div style="left:0px;top:1px;width:1px;height:64px;background:#bfe6d0;"></div>
<div style="left:1284px;top:1px;width:1px;height:64px;background:#bfe6d0;"></div>
<div style="left:0px;top:65px;width:1px;height:755px;background:#cfcfcf;"></div>
<div style="left:1284px;top:65px;width:1px;height:755px;background:#cfcfcf;"></div>
<div style="left:0px;top:819px;width:1285px;height:1px;background:#cfcfcf;"></div>
</body></html>
